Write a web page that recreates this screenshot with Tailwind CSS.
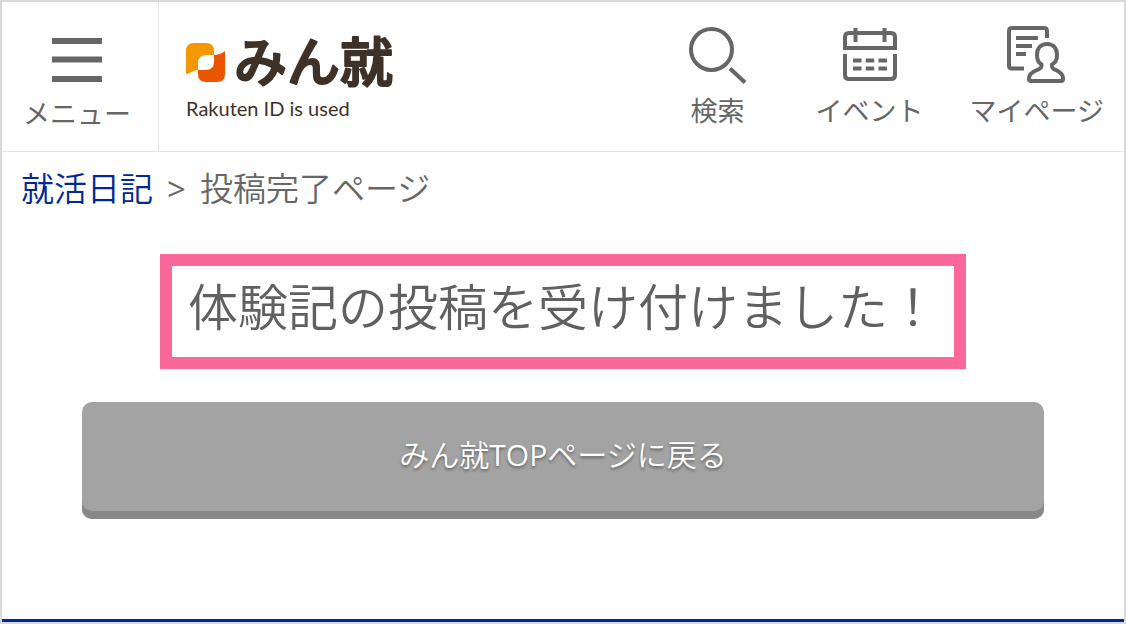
<!DOCTYPE html>
<html lang="ja">

<head>
	<meta charset="UTF-8">
	<meta name="viewport" content="width=device-width, initial-scale=1.0">
	<title>投稿完了ページ | みん就</title>
	<script src="https://cdn.jsdelivr.net/npm/@tailwindcss/browser@4"></script>
</head>

<body class="min-h-screen flex flex-col bg-white border-2 border-[#d9d9d9] text-[#666] font-['Open_Sans','Noto_Sans_CJK_JP',sans-serif]">

	<header class="flex h-[150px] border-b border-[#e6e6e6]">
		<button type="button" class="w-[157px] shrink-0 border-r border-[#e6e6e6] flex flex-col items-center pt-9 pr-1.5 gap-3">
			<svg class="w-[50px] h-[44px]" viewBox="0 0 50 44" fill="currentColor" aria-hidden="true">
				<path d="M0 0h50v6H0zM0 18.500h50v6H0zM0 38h50v6H0z" />
			</svg>
			<span class="text-[27px] leading-[40px]">メニュー</span>
		</button>

		<!-- Logo -->
		<a href="#" class="flex flex-col pl-[27px] pt-7 text-[#3e3228]">
			<span class="flex items-center gap-2">
				<svg class="w-10 h-10" viewBox="0 0 40 40" aria-hidden="true">
					<path fill="#f39800" d="M0 31V8Q0 0 8 0H20Q28 0 28 8V12H21Q12 12 12 20V27Q6 28 4 30Q2 31 0 31Z" />
					<path fill="#eb5500" d="M28 12Q34 12 39 8V31Q39 39 31 39H20Q12 39 12 31V27H19Q28 27 28 19Z" />
				</svg>
				<svg class="w-[170px] h-[66px] overflow-visible" viewBox="0 0 170 66" role="img" aria-label="みん就">
					<text x="0" y="52" font-size="53" font-weight="500" font-family="'Noto Sans CJK JP', sans-serif" fill="#3e3228" stroke="#3e3228" stroke-width="2" stroke-linejoin="round" stroke-linecap="round">みん就</text>
				</svg>
			</span>
			<span class="text-[20px] leading-6 font-['Lato',sans-serif]">Rakuten ID is used</span>
		</a>

		<nav class="ml-auto flex gap-[46px] pr-5 pt-[22px]">
			<a href="#" class="w-26 flex flex-col items-center gap-1.5">
				<svg class="w-[60px] h-[60px]" viewBox="0 0 60 60" fill="none" stroke="currentColor" stroke-width="4" aria-hidden="true">
					<circle cx="23.500" cy="25.500" r="20.500" />
					<path d="M42 44.500L57 58.500" />
				</svg>
				<span class="text-[27px] leading-[42px]">検索</span>
			</a>
			<a href="#" class="flex flex-col items-center gap-1.5">
				<svg class="w-[60px] h-[60px]" viewBox="0 0 60 60" fill="none" stroke="currentColor" stroke-width="4" aria-hidden="true">
					<path d="M5 24V13Q5 9 9 9H51Q55 9 55 13V24Z" />
					<path d="M5 30V51Q5 55 9 55H51Q55 55 55 51V30M15.500 4V18M44.500 4V18" />
					<path d="M13 36.500H47M13 44.500H47" stroke-dasharray="8.500 4.250" />
				</svg>
				<span class="text-[27px] leading-[42px]">イベント</span>
			</a>
			<a href="#" class="flex flex-col items-center gap-1.5">
				<svg class="w-[60px] h-[60px]" viewBox="0 0 60 60" fill="none" stroke="currentColor" stroke-width="4" aria-hidden="true">
					<path d="M17 44.500H5Q2 44.500 2 41.500V7Q2 4 5 4H37Q40 4 40 7V14" />
					<path d="M9 14H31M9 22H25M9 30H19" />
					<path d="M40 20C34 20 30 24 30 31C30 36 32 39 34.500 40.500C35 44 33 45 30 46C25 48 22 50 22 54V55Q22 57 24 57H54Q56 57 56 55V54C56 50 53 48 49 46C46 45 44.500 44 45 40.500C48 39 50 36 50 31C50 24 46 20 40 20Z" />
				</svg>
				<span class="text-[27px] leading-[42px]">マイページ</span>
			</a>
		</nav>
	</header>

	<main class="flex-1 border-b-3 border-[#002896]">
		<nav class="flex gap-3.5 px-[19px] pt-3 text-[33px] leading-[50px] font-[350]" aria-label="breadcrumb">
			<a href="#" class="text-[#002896]">就活日記</a>
			<span class="font-normal">&gt;</span>
			<span>投稿完了ページ</span>
		</nav>

		<div class="w-fit mx-auto mt-10 px-4 pb-2 border-12 border-[#f96899]">
			<h1 class="text-[50px] leading-[83px] font-[350] text-[#606060] whitespace-nowrap">体験記の投稿を受け付けました！</h1>
		</div>

		<div class="mx-20 mt-[33px]">
			<button type="button" class="block w-full h-[117px] rounded-[10px] bg-[#a3a3a3] shadow-[inset_0_-8px_0_#888] pb-3 text-[30px] font-[350] text-white text-shadow-[0_2px_3px_rgb(0_0_0/0.4)]">みん就<span class="font-normal">TOP</span>ページに戻る</button>
		</div>
	</main>

</body>

</html>
